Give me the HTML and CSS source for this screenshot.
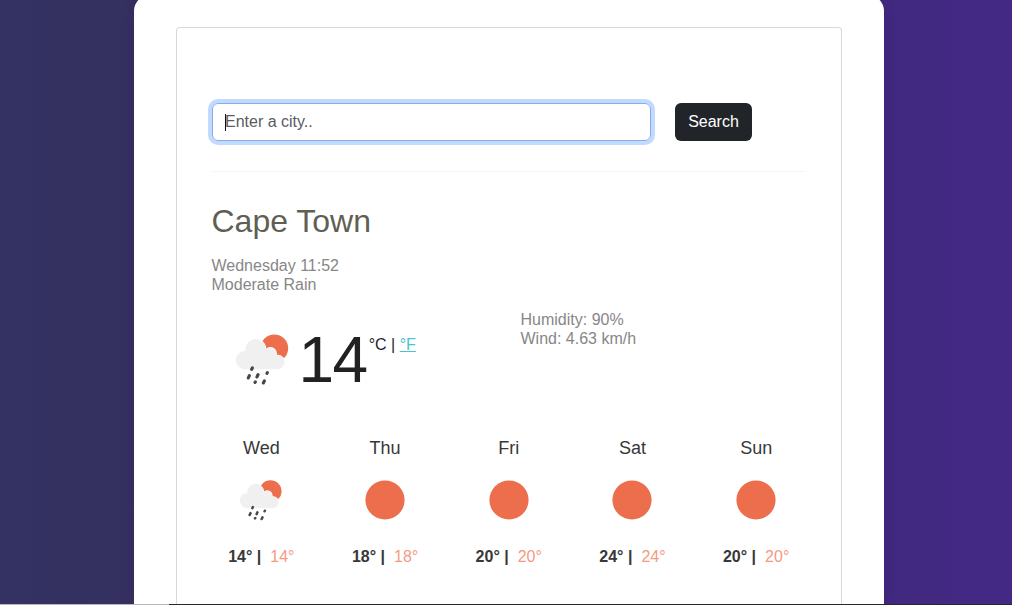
FILE: index.html
```html
<!DOCTYPE html>
<html lang="en">
<head>
<meta charset="utf-8">
<title>Weather</title>
<link rel="stylesheet" href="styles.css">
</head>
<body>
<svg class="symbols" aria-hidden="true">
  <symbol id="rain" viewBox="30 40 165 160">
    <circle cx="148" cy="86" r="41.5" fill="#ec6e4c"/>
    <g fill="#fff">
      <circle cx="92" cy="89" r="32"/><circle cx="136" cy="102" r="20"/><circle cx="158" cy="128" r="23"/>
    </g>
    <g fill="#f0f0f0">
      <circle cx="92" cy="89" r="31"/><circle cx="61" cy="121" r="28"/><circle cx="135" cy="104" r="19"/><circle cx="157" cy="128" r="21"/>
      <rect x="61" y="107" width="96" height="42"/>
    </g>
    <g stroke="#484848" stroke-width="9.5" stroke-linecap="round">
      <path d="M82 145l-2 4M73 168l-3 7M99 165l-3 7M127 159l-1 2M91 187l-1 1M118 184l-3 6"/>
    </g>
  </symbol>
  <symbol id="sun" viewBox="0 0 40 40"><circle cx="20" cy="20" r="19.6" fill="#ec6e4c"/></symbol>
</svg>
<main class="container">
  <section class="card">
    <form class="search">
      <div class="field"><span class="caret"></span>Enter a city..</div>
      <button class="button" type="button">Search</button>
    </form>
    <hr class="rule">
    <h1 class="city">Cape Town</h1>
    <div class="summary">Wednesday 11:52<br>Moderate Rain</div>
    <div class="current">
      <div class="reading">
        <svg class="current-icon"><use href="#rain"/></svg>
        <span class="temperature">14</span>
        <span class="units">°C | <a class="unit-link" href="#">°F</a></span>
      </div>
      <div class="details">Humidity: 90%<br>Wind: 4.63 km/h</div>
    </div>
    <div class="forecast">
      <div class="day"><div class="day-name">Wed</div><svg class="rain-icon"><use href="#rain"/></svg><div class="range"><b>14° |</b><span class="low">14°</span></div></div>
      <div class="day"><div class="day-name">Thu</div><svg class="sun-icon"><use href="#sun"/></svg><div class="range"><b>18° |</b><span class="low">18°</span></div></div>
      <div class="day"><div class="day-name">Fri</div><svg class="sun-icon"><use href="#sun"/></svg><div class="range"><b>20° |</b><span class="low">20°</span></div></div>
      <div class="day"><div class="day-name">Sat</div><svg class="sun-icon"><use href="#sun"/></svg><div class="range"><b>24° |</b><span class="low">24°</span></div></div>
      <div class="day"><div class="day-name">Sun</div><svg class="sun-icon"><use href="#sun"/></svg><div class="range"><b>20° |</b><span class="low">20°</span></div></div>
    </div>
  </section>
</main>
<div class="edge"></div>
</body>
</html>
```
FILE: styles.css
```css
* { box-sizing: border-box; }
body {
  margin: 0;
  height: 605px;
  overflow: hidden;
  background: linear-gradient(90deg, #333262 0%, #353060 14%, #412880 88%, #432984 100%);
  font: 16px/19px "Liberation Sans", Arial, sans-serif;
  color: #212529;
}
.symbols { display: block; width: 0; height: 0; }
.container {
  width: 750px;
  height: 610px;
  margin: -5px 0 0 134px;
  padding: 32px 42px 0;
  background: #fff;
  border-radius: 16px 16px 0 0;
  box-shadow: 0 0 14px rgba(50, 20, 70, .12);
}
.card {
  height: 578px;
  padding: 75px 35px 0;
  border: 1px solid #d9d9d9;
  border-bottom: 0;
  border-radius: 4px 4px 0 0;
}
.search { display: flex; gap: 24px; height: 38px; }
.field {
  display: flex;
  align-items: center;
  width: 439px;
  padding: 0 12px 2px;
  border: 1px solid #86acf0;
  border-radius: 6px;
  box-shadow: 0 0 0 4px #c2dafe;
  color: #595c5f;
}
.caret { width: 1px; height: 17px; margin: 3px -1px 0 0; background: #111; }
.button {
  width: 77px;
  padding: 0 0 1px;
  border: 0;
  border-radius: 6px;
  background: #212529;
  color: #fff;
  font: inherit;
}
.rule { height: 1px; margin: 30px 0 0; border: 0; background: #f6f6f6; }
.city { margin: 29px 0 0 -0.5px; font-size: 32px; line-height: 40px; font-weight: 400; color: #5f5f54; }
.summary { margin: 15px 0 0 -0.5px; color: #878787; }
.current { display: flex; height: 141px; padding-top: 16px; }
.reading { display: flex; width: 308.5px; padding-left: 23px; }
.current-icon { width: 55px; height: 53.3px; margin-top: 23.3px; }
.temperature { margin: 15px 0 0 8.5px; font-size: 64px; line-height: 70px; letter-spacing: -1.5px; color: #212121; }
.units { margin: 25px 0 0 2px; white-space: nowrap; }
.unit-link { color: #46c4cf; }
.details { color: #878787; }
.forecast { display: grid; grid-template-columns: repeat(5, 1fr); column-gap: 24px; margin-left: -0.5px; padding-top: 2px; color: #383838; }
.day { display: flex; flex-direction: column; align-items: center; }
.day-name { height: 42px; font-size: 18px; line-height: 22px; }
.rain-icon { width: 44px; height: 42.7px; margin-bottom: 25.3px; }
.sun-icon { width: 40px; height: 40px; margin: 1.4px 0 26.6px; }
.range { white-space: nowrap; }
.low { margin-left: 9px; color: #f59a82; }
.edge { position: absolute; left: 0; bottom: 0; width: 100%; height: 1px; background: linear-gradient(90deg, #b9b9c2 169px, #25272a 169px); }
```
